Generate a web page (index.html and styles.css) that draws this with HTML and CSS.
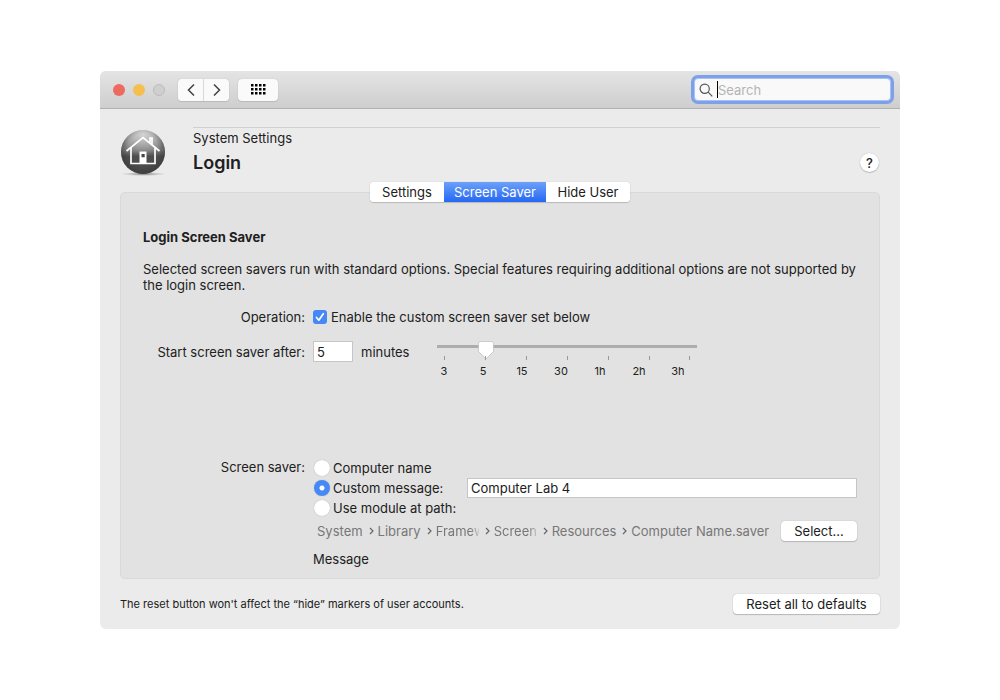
FILE: index.html
```html
<!DOCTYPE html>
<html lang="en">
<head>
<meta charset="utf-8">
<title>Login</title>
<link rel="stylesheet" href="styles.css">
</head>
<body>
<main class="window">
  <header class="titlebar">
    <div class="lights">
      <span class="light light-close"></span>
      <span class="light light-minimize"></span>
      <span class="light light-zoom"></span>
    </div>
    <div class="nav">
      <button class="nav-button" type="button" aria-label="Back"><svg width="10" height="14" viewBox="0 0 10 14"><path d="M8 1.5 2.5 7 8 12.5"/></svg></button>
      <button class="nav-button" type="button" aria-label="Forward"><svg width="10" height="14" viewBox="0 0 10 14"><path d="M2 1.5 7.5 7 2 12.5"/></svg></button>
    </div>
    <button class="grid-button" type="button" aria-label="Show all"><svg width="15" height="11" viewBox="0 0 15 11"><path d="M0 0h2.500v2.500H0zM4 0h2.500v2.500H4zM8 0h2.500v2.500H8zM12 0h2.500v2.500H12zM0 4h2.500v2.500H0zM4 4h2.500v2.500H4zM8 4h2.500v2.500H8zM12 4h2.500v2.500H12zM0 8h2.500v2.500H0zM4 8h2.500v2.500H4zM8 8h2.500v2.500H8zM12 8h2.500v2.500H12z"/></svg></button>
    <div class="search">
      <svg width="14" height="14" viewBox="0 0 14 14"><circle cx="5.700" cy="5.700" r="4.600"/><path d="m9.100 9.100 4.200 4.200"/></svg>
      <span class="caret"></span>
      <input class="search-input" type="search" placeholder="Search" aria-label="Search">
    </div>
  </header>

  <section class="heading">
    <svg class="heading-icon" width="48" height="50" viewBox="0 0 48 50" aria-hidden="true">
      <defs>
        <linearGradient id="ball" x1="0" y1="0" x2="0" y2="1"><stop offset="0" stop-color="#b4b4b4"/><stop offset=".45" stop-color="#7c7c7c"/><stop offset=".6" stop-color="#4d4d4d"/><stop offset="1" stop-color="#505050"/></linearGradient>
        <radialGradient id="rim" cx=".5" cy=".45" r=".58"><stop offset=".6" stop-color="#333" stop-opacity="0"/><stop offset="1" stop-color="#333" stop-opacity=".7"/></radialGradient>
        <radialGradient id="gloss" cx=".5" cy=".1" r=".5"><stop offset="0" stop-color="#fff" stop-opacity=".5"/><stop offset="1" stop-color="#fff" stop-opacity="0"/></radialGradient>
        <radialGradient id="ground"><stop offset="0" stop-color="#777"/><stop offset="1" stop-color="#aaa" stop-opacity="0"/></radialGradient>
      </defs>
      <ellipse cx="23.500" cy="47" rx="23" ry="2" fill="url(#ground)"/>
      <circle cx="23" cy="25" r="22" fill="url(#ball)"/>
      <circle cx="23" cy="25" r="22" fill="url(#rim)"/>
      <circle cx="23" cy="25" r="22" fill="url(#gloss)"/>
      <g fill="none" stroke="#fff" stroke-width="1.700"><path d="M6.500 24 23 10.500 39.500 24M11 21v15.500h24V21M30 15.500V11h2v6.500"/></g>
      <path d="M19.500 24.500h7v12h-7z" fill="#fff"/><path d="M21.500 27h3.200v3.200h-3.200z" fill="#444"/>
    </svg>
    <div class="heading-body">
      <div class="heading-text">
        <p class="breadcrumb">System Settings</p>
        <h1 class="title">Login</h1>
      </div>
      <button class="help" type="button" aria-label="Help">?</button>
    </div>
  </section>

  <section class="panel">
    <nav class="tabs">
      <button class="tab" type="button">Settings</button>
      <button class="tab tab-active" type="button">Screen Saver</button>
      <button class="tab" type="button">Hide User</button>
    </nav>
    <h2 class="subtitle">Login Screen Saver</h2>
    <p class="intro">Selected screen savers run with standard options. Special features requiring additional options are not supported by the login screen.</p>

    <div class="row">
      <span class="row-label">Operation:</span>
      <label class="choice"><input class="checkbox" type="checkbox" checked>Enable the custom screen saver set below</label>
    </div>

    <div class="row row-delay">
      <label class="row-label" for="minutes">Start screen saver after:</label>
      <div class="delay">
        <input class="field field-minutes" id="minutes" type="text" value="5">
        <span class="unit">minutes</span>
        <div class="slider">
          <input class="range" type="range" min="0" max="6" value="1" aria-label="Delay">
          <div class="ticks"><i></i><i></i><i></i><i></i><i></i><i></i><i></i></div>
          <div class="tick-labels"><span>3</span><span>5</span><span>15</span><span>30</span><span>1h</span><span>2h</span><span>3h</span></div>
        </div>
      </div>
    </div>

    <div class="row row-saver">
      <span class="row-label">Screen saver:</span>
      <div class="saver">
        <label class="choice"><input class="radio" type="radio" name="saver">Computer name</label>
        <div class="message-row">
          <label class="choice"><input class="radio" type="radio" name="saver" checked>Custom message:</label>
          <input class="field field-message" type="text" value="Computer Lab 4" aria-label="Custom message text">
        </div>
        <label class="choice"><input class="radio" type="radio" name="saver">Use module at path:</label>
        <div class="path-row">
          <div class="path">
            <span>System</span><svg class="sep" viewBox="0 0 5 8"><path d="m1 1 3 3-3 3"/></svg>
            <span>Library</span><svg class="sep" viewBox="0 0 5 8"><path d="m1 1 3 3-3 3"/></svg>
            <span class="clipped">Framew</span><svg class="sep" viewBox="0 0 5 8"><path d="m1 1 3 3-3 3"/></svg>
            <span class="clipped">ScreenS</span><svg class="sep" viewBox="0 0 5 8"><path d="m1 1 3 3-3 3"/></svg>
            <span>Resources</span><svg class="sep" viewBox="0 0 5 8"><path d="m1 1 3 3-3 3"/></svg>
            <span>Computer Name.saver</span>
          </div>
          <button class="button button-select" type="button">Select...</button>
        </div>
        <p class="note">Message</p>
      </div>
    </div>
  </section>

  <footer class="footer">
    <p class="footnote">The reset button won't affect the “hide” markers of user accounts.</p>
    <button class="button button-reset" type="button">Reset all to defaults</button>
  </footer>
</main>
</body>
</html>
```
FILE: styles.css
```css
* { box-sizing: border-box; }
body {
  margin: 0;
  padding: 71px 100px;
  background: #fff;
  color: #202020;
  font: 13px/16px Inter, "Liberation Sans", sans-serif;
}
p, h1, h2 { margin: 0; }
button, input { font: inherit; color: inherit; margin: 0; }
button { padding: 0; border: 0; }
.window { background: #ebebeb; border-radius: 6px; overflow: hidden; }

.titlebar {
  display: flex;
  align-items: center;
  height: 38px;
  padding: 0 9px 0 13px;
  background: linear-gradient(#e4e4e4, #cecece);
  border-bottom: 1px solid #b2b2b2;
}
.lights { display: flex; gap: 8px; margin-right: 13px; }
.light { width: 12px; height: 12px; border-radius: 50%; }
.light-close { background: #ed6a5f; }
.light-minimize { background: #f4bf4f; }
.light-zoom { background: #cfcfcf; border: 1px solid #bcbcbc; }
.nav { display: flex; gap: 1px; margin-right: 9px; background: #d8d8d8; border-radius: 4px; box-shadow: 0 0 1px #aaa, 0 1px 1px #bbb; overflow: hidden; }
.nav-button, .grid-button { display: flex; align-items: center; justify-content: center; height: 22px; background: #fafafa; }
.nav-button { width: 25px; }
.nav-button svg { fill: none; stroke: #404040; stroke-width: 1.5; }
.grid-button { width: 40px; border-radius: 4px; box-shadow: 0 0 1px #aaa, 0 1px 1px #bbb; }
.search {
  position: relative;
  display: flex;
  align-items: center;
  gap: 5px;
  width: 197px;
  height: 23px;
  margin-left: auto;
  padding: 0 4px;
  background: #f9f9f9;
  border: 1px solid #a9c2f5;
  border-radius: 4px;
  box-shadow: 0 0 0 3px #7ca1e8;
}
.search svg { flex: none; fill: none; stroke: #555; stroke-width: 1.2; }
.search-input { flex: 1; min-width: 0; padding: 0; border: 0; outline: 0; background: none; appearance: none; }
.search-input::placeholder { color: #b4b4b4; }
.caret { position: absolute; left: 22px; top: 2px; width: 1px; height: 17px; background: #000; }

.heading { display: flex; padding: 18px 20px 0; }
.heading-icon { flex: none; width: 48px; margin-right: 25px; }
.heading-body { flex: 1; display: flex; justify-content: space-between; height: 65px; padding-top: 2px; border-top: 1px solid #d0d0d0; }
.title { margin-top: 5px; font-size: 18px; line-height: 24px; font-weight: 600; }
.help { width: 19px; height: 19px; margin: 23px 1px 0 0; border-radius: 50%; background: #fff; box-shadow: 0 0 1px #aaa, 0 1px 1px #bbb; font-weight: 500; }

.panel { margin: 0 20px; padding: 0 22px 11px; background: #e2e2e2; border: 1px solid #d9d9d9; border-radius: 5px; }
.tabs { display: flex; width: 260px; height: 20px; margin: -11px auto 0; border-radius: 4px; background: #fff; box-shadow: 0 0 1px #aaa, 0 1px 1px #bbb; overflow: hidden; }
.tab { flex: 74 1 0; background: #fff; }
.tab:last-child { flex-grow: 84; }
.tab-active { flex-grow: 102; background: linear-gradient(#6da0f8, #2468f4); color: #fff; }
.subtitle { margin-top: 27px; font-size: 13px; line-height: 16px; font-weight: 700; }
.intro { margin-top: 16px; }

.row { display: flex; gap: 8px; margin-top: 16px; }
.row-label { flex: none; width: 162px; text-align: right; }
.row-delay .row-label { margin-top: 3px; }
.choice { display: flex; align-items: center; white-space: nowrap; }
.checkbox, .radio { flex: none; appearance: none; background: #fff; }
.checkbox { width: 14px; height: 14px; margin-right: 4px; border-radius: 3px; }
.checkbox:checked { background: #4688f6 url("data:image/svg+xml,%3Csvg xmlns='http://www.w3.org/2000/svg' viewBox='0 0 14 14'%3E%3Cpath d='m3.500 7.500 2.300 2.700 4.500-6.500' fill='none' stroke='white' stroke-width='1.700' stroke-linecap='round' stroke-linejoin='round'/%3E%3C/svg%3E"); }
.radio { width: 16px; height: 16px; margin: 2px 3px 2px 1px; border-radius: 50%; box-shadow: 0 0 1px #999; }
.radio:checked { background: radial-gradient(#fff 2px, #4688f6 3px); }
.delay { display: flex; align-items: flex-start; flex: 1; }
.field { height: 20px; padding: 0 3px; border: 1px solid #c6c6c6; border-radius: 0; background: #fff; outline: 0; }
.field-minutes { width: 40px; height: 21px; }
.unit { margin: 3px 28px 0 8px; }
.slider { width: 260px; }
.range { display: block; width: 100%; height: 20px; appearance: none; background: linear-gradient(#adadad, #adadad) 0 4px / 100% 3px no-repeat; }
.range::-webkit-slider-thumb {
  appearance: none;
  width: 16px;
  height: 20px;
  background: url("data:image/svg+xml,%3Csvg xmlns='http://www.w3.org/2000/svg' viewBox='0 0 16 20'%3E%3Cpath d='M2.500.5h11q2 0 2 2v8L8 18 .5 10.500v-8q0-2 2-2z' fill='white' stroke='%23bbb' stroke-width='.7'/%3E%3C/svg%3E");
}
.ticks { display: flex; justify-content: space-between; height: 4px; margin: -5px 7px 0; }
.ticks i { width: 1px; background: #999; }
.tick-labels { display: grid; grid-template-columns: repeat(7, 39px); margin: 3px 0 0 -13px; font-size: 11px; line-height: 16px; text-align: center; }

.row-saver { margin-top: 80px; }
.saver { flex: 1; min-width: 0; margin-top: -1px; }
.message-row { display: flex; justify-content: space-between; height: 20px; }
.field-message { width: 390px; }
.path-row { display: flex; align-items: center; justify-content: space-between; margin-top: 3px; padding-left: 4px; }
.path { display: flex; align-items: center; color: #777; white-space: nowrap; }
.sep { flex: none; width: 5px; height: 8px; margin: 0 4px 0 6px; fill: none; stroke: #666; stroke-width: 1.2; }
.clipped { width: 43px; overflow: hidden; mask-image: linear-gradient(90deg, #000 34px, transparent 46px); }
.button { flex: none; height: 20px; border-radius: 4px; background: #fff; box-shadow: 0 0 1px #999, 0 1px 1px #bbb; }
.button-select { width: 76px; }
.note { margin-top: 10px; }

.footer { display: flex; align-items: center; justify-content: space-between; padding: 15px 20px; }
.footnote { font-size: 11px; }
.button-reset { width: 147px; }
```
